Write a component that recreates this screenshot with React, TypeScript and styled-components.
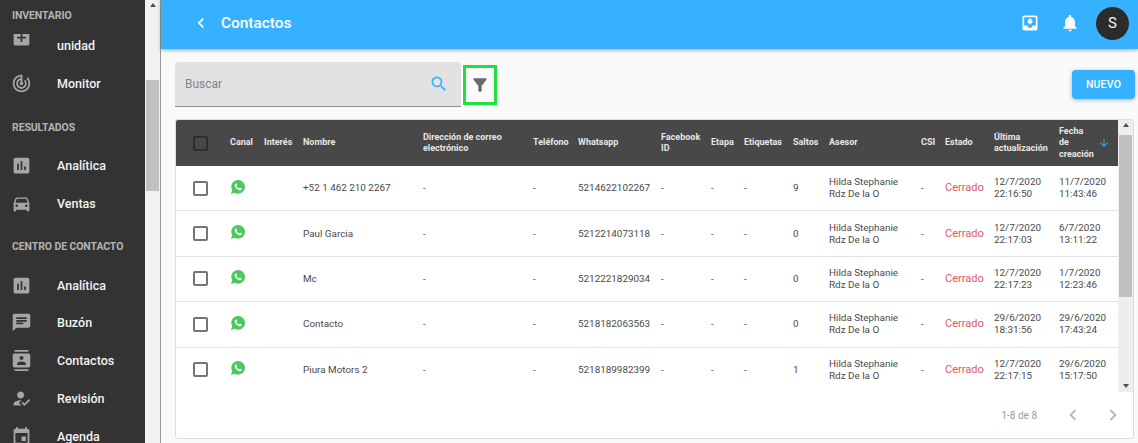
import styled, { createGlobalStyle } from 'styled-components';
import type { ReactNode } from 'react';
import {
  MdAddBox,
  MdArrowDownward,
  MdAssessment,
  MdChat,
  MdChevronLeft,
  MdChevronRight,
  MdContacts,
  MdDirectionsCar,
  MdEvent,
  MdFilterAlt,
  MdHowToReg,
  MdMoveToInbox,
  MdNotifications,
  MdSearch,
  MdTrackChanges,
} from 'react-icons/md';
import { IoLogoWhatsapp } from 'react-icons/io';

const GlobalStyle = createGlobalStyle`
  html, body {
    margin: 0;
    padding: 0;
    height: 100%;
    overflow: hidden;
    font-family: Roboto, "Liberation Sans", sans-serif;
    background: #fafafa;
  }
`;

const COLUMNS = '54px 34px 39px 120px 110px 45px 83px 50px 33px 49px 36px 92px 24px 49px 65px 60px';

const Page = styled.div`
  display: flex;
  width: 1138px;
  height: 443px;
  overflow: hidden;
`;

const Sidebar = styled.nav`
  flex: 0 0 145px;
  height: 443px;
  overflow: hidden;
  background: #333333;
  display: flex;
  flex-direction: column;
`;

const SectionTitle = styled.div<{ $first?: boolean }>`
  position: relative;
  z-index: 1;
  flex: none;
  height: ${({ $first }) => ($first ? '34px' : '36px')};
  margin-top: ${({ $first }) => ($first ? '0' : '8px')};
  padding: ${({ $first }) => ($first ? '10px 0 0 12px' : '11px 0 0 12px')};
  box-sizing: border-box;
  background: #333333;
  color: #b4b4b4;
  font-size: 10.5px;
  font-weight: 700;
  line-height: 12px;
  letter-spacing: -0.1px;
`;

const NavItem = styled.div<{ $clipped?: boolean }>`
  flex: none;
  display: flex;
  align-items: center;
  height: 37.8px;
  margin-top: ${({ $clipped }) => ($clipped ? '-7px' : '0')};
  padding-left: 11px;
  color: #f2f2f2;
  font-size: 12.5px;
  font-weight: 500;

  svg {
    flex: none;
    width: 21px;
    height: 21px;
    margin-right: 25px;
    margin-top: ${({ $clipped }) => ($clipped ? '-16px' : '0')};
    color: #a6a6a6;
  }
`;

const ScrollTrack = styled.div<{ $width: number }>`
  flex: 0 0 ${({ $width }) => $width}px;
  display: flex;
  flex-direction: column;
  align-items: center;
  background: #f1f1f1;
  box-sizing: border-box;
`;

const ArrowUp = styled.div`
  flex: none;
  width: 0;
  height: 0;
  margin-top: 3px;
  border-left: 3.5px solid transparent;
  border-right: 3.5px solid transparent;
  border-bottom: 4px solid #505050;
`;

const ArrowDown = styled.div`
  flex: none;
  width: 0;
  height: 0;
  margin-bottom: 4px;
  border-left: 3.5px solid transparent;
  border-right: 3.5px solid transparent;
  border-top: 4px solid #505050;
`;

const Thumb = styled.div<{ $top: number; $height: number }>`
  flex: none;
  align-self: stretch;
  margin: ${({ $top }) => $top}px 1px 0;
  height: ${({ $height }) => $height}px;
  background: #c1c1c1;
`;

const SideScroll = styled(ScrollTrack)`
  border-right: 1px solid #9a9a9a;
`;

const Main = styled.main`
  flex: 1;
  min-width: 0;
  display: flex;
  flex-direction: column;
  background: #fafafa;
`;

const AppBar = styled.header`
  flex: none;
  height: 49px;
  box-sizing: border-box;
  display: flex;
  align-items: center;
  padding: 0 9px 3px 30px;
  background: #36b1ff;
  box-shadow: 0 1px 4px rgba(0, 0, 0, 0.35);
  color: #ffffff;
  position: relative;
  z-index: 2;
`;

const BackIcon = styled(MdChevronLeft)`
  width: 20px;
  height: 20px;
  margin-right: 10px;
`;

const PageTitle = styled.h1`
  flex: 1;
  margin: 0;
  font-size: 15.4px;
  font-weight: 500;
`;

const BarIcons = styled.div`
  display: flex;
  align-items: center;
  gap: 20px;
  margin-right: 16px;

  svg {
    display: block;
    width: 20px;
    height: 20px;
  }
`;

const Avatar = styled.div`
  width: 33px;
  height: 33px;
  border-radius: 50%;
  background: #2b2b2b;
  display: flex;
  align-items: center;
  justify-content: center;
  font-size: 15px;
  color: #f4f4f4;
`;

const Toolbar = styled.div`
  flex: none;
  display: flex;
  align-items: center;
  height: 45px;
  margin-top: 13px;
  padding: 0 3px 0 14px;
`;

const SearchBox = styled.div`
  width: 286px;
  height: 45px;
  box-sizing: border-box;
  display: flex;
  align-items: center;
  justify-content: space-between;
  padding: 0 12px 0 10px;
  background: #e2e2e2;
  border-bottom: 1px solid #8e8e8e;
  border-radius: 4px 4px 0 0;
  color: #858585;
  font-size: 12px;

  svg {
    width: 20px;
    height: 20px;
    color: #36b1ff;
  }
`;

const FilterButton = styled.div`
  width: 34px;
  height: 40px;
  box-sizing: border-box;
  margin-left: 2px;
  display: flex;
  align-items: center;
  justify-content: center;
  border: 3px solid #1fe03c;
  color: #6a6a6a;

  svg {
    width: 20px;
    height: 20px;
  }
`;

const NewButton = styled.button`
  width: 63px;
  height: 29px;
  margin-left: auto;
  margin-bottom: 1px;
  border: none;
  border-radius: 4px;
  background: #36b1ff;
  box-shadow: 0 1px 4px rgba(0, 0, 0, 0.3);
  color: #ffffff;
  font-family: inherit;
  font-size: 10.5px;
  font-weight: 500;
  letter-spacing: 0.2px;
`;

const Card = styled.section`
  flex: none;
  display: flex;
  flex-direction: column;
  width: 959px;
  height: 320px;
  margin: 12px 0 0 14px;
  box-sizing: border-box;
  border: 1px solid #dcdcdc;
  border-radius: 3px;
  background: #ffffff;
  overflow: hidden;
`;

const TableArea = styled.div`
  flex: none;
  display: flex;
  height: 272px;
`;

const Table = styled.div`
  width: 943px;
  overflow: hidden;
`;

const HeadRow = styled.div`
  display: grid;
  grid-template-columns: ${COLUMNS};
  align-items: center;
  height: 46px;
  background: #484848;
  color: #e6e6e6;
  font-size: 9px;
  font-weight: 700;
  line-height: 11.5px;
`;

const BodyRow = styled.div`
  display: grid;
  grid-template-columns: ${COLUMNS};
  align-items: center;
  height: 45.4px;
  box-sizing: border-box;
  border-bottom: 1px solid #e2e2e2;
  color: #4a4a4a;
  font-size: 9.9px;
  line-height: 12px;
`;

const CheckCell = styled.div`
  padding-left: 17px;
`;

const Checkbox = styled.div<{ $dark?: boolean }>`
  width: 15px;
  height: 15px;
  box-sizing: border-box;
  border: 2px solid ${({ $dark }) => ($dark ? '#2e2e2e' : '#757575')};
  border-radius: 2px;
  background: ${({ $dark }) => ($dark ? 'transparent' : '#ffffff')};
`;

const SortCell = styled.div`
  display: flex;
  align-items: center;
  justify-content: space-between;
  padding-right: 9px;

  svg {
    width: 12px;
    height: 12px;
    color: #36a4ec;
  }
`;

const Whatsapp = styled(IoLogoWhatsapp)`
  display: block;
  width: 16px;
  height: 16px;
  margin-bottom: 3px;
  color: #4ac95f;
`;

const Status = styled.div`
  color: #dd5a5f;
  font-size: 11px;
`;

const Footer = styled.div`
  flex: 1;
  display: flex;
  align-items: center;
  justify-content: flex-end;
  padding-right: 9px;
  color: #9a9a9a;
  font-size: 10px;

  svg {
    width: 22px;
    height: 22px;
    color: #b4b4b4;
    margin-left: 18px;
  }
`;

const PageCount = styled.span`
  margin-right: 7px;
`;

const TableScroll = styled(ScrollTrack)`
  background: #eeeeee;
  justify-content: flex-start;
`;

const Spacer = styled.div`
  flex: 1;
`;

const headers: ReactNode[] = [
  'Canal',
  'Interés',
  'Nombre',
  <>Dirección de correo<br />electrónico</>,
  'Teléfono',
  'Whatsapp',
  <>Facebook<br />ID</>,
  'Etapa',
  'Etiquetas',
  'Saltos',
  'Asesor',
  'CSI',
  'Estado',
  <>Última<br />actualización</>,
];

const contacts = [
  { name: '+52 1 462 210 2267', phone: '5214622102267', jumps: '9', updated: ['12/7/2020', '22:16:50'], created: ['11/7/2020', '11:43:46'] },
  { name: 'Paul Garcia', phone: '5212214073118', jumps: '0', updated: ['12/7/2020', '22:17:03'], created: ['6/7/2020', '13:11:22'] },
  { name: 'Mc', phone: '5212221829034', jumps: '0', updated: ['12/7/2020', '22:17:23'], created: ['1/7/2020', '12:23:46'] },
  { name: 'Contacto', phone: '5218182063563', jumps: '0', updated: ['29/6/2020', '18:31:56'], created: ['29/6/2020', '17:43:24'] },
  { name: 'Piura Motors 2', phone: '5218189982399', jumps: '1', updated: ['12/7/2020', '22:17:15'], created: ['29/6/2020', '15:17:50'] },
];

const App = () => {
  return (
    <>
      <GlobalStyle />
      <Page>
        <Sidebar>
          <SectionTitle $first>INVENTARIO</SectionTitle>
          <NavItem $clipped><MdAddBox />unidad</NavItem>
          <NavItem><MdTrackChanges />Monitor</NavItem>
          <SectionTitle>RESULTADOS</SectionTitle>
          <NavItem><MdAssessment />Analítica</NavItem>
          <NavItem><MdDirectionsCar />Ventas</NavItem>
          <SectionTitle>CENTRO DE CONTACTO</SectionTitle>
          <NavItem><MdAssessment />Analítica</NavItem>
          <NavItem><MdChat />Buzón</NavItem>
          <NavItem><MdContacts />Contactos</NavItem>
          <NavItem><MdHowToReg />Revisión</NavItem>
          <NavItem><MdEvent />Agenda</NavItem>
        </Sidebar>
        <SideScroll $width={16}>
          <ArrowUp />
          <Thumb $top={73} $height={111} />
        </SideScroll>
        <Main>
          <AppBar>
            <BackIcon />
            <PageTitle>Contactos</PageTitle>
            <BarIcons>
              <MdMoveToInbox />
              <MdNotifications />
            </BarIcons>
            <Avatar>S</Avatar>
          </AppBar>
          <Toolbar>
            <SearchBox>
              Buscar
              <MdSearch />
            </SearchBox>
            <FilterButton><MdFilterAlt /></FilterButton>
            <NewButton>NUEVO</NewButton>
          </Toolbar>
          <Card>
            <TableArea>
              <Table>
                <HeadRow>
                  <CheckCell><Checkbox $dark /></CheckCell>
                  {headers.map((header, i) => <div key={i}>{header}</div>)}
                  <SortCell>
                    <div>Fecha<br />de<br />creación</div>
                    <MdArrowDownward />
                  </SortCell>
                </HeadRow>
                {contacts.map((contact) => (
                  <BodyRow key={contact.phone}>
                    <CheckCell><Checkbox /></CheckCell>
                    <div><Whatsapp /></div>
                    <div />
                    <div>{contact.name}</div>
                    <div>-</div>
                    <div>-</div>
                    <div>{contact.phone}</div>
                    <div>-</div>
                    <div>-</div>
                    <div>-</div>
                    <div>{contact.jumps}</div>
                    <div>Hilda Stephanie<br />Rdz De la O</div>
                    <div>-</div>
                    <Status>Cerrado</Status>
                    <div>{contact.updated[0]}<br />{contact.updated[1]}</div>
                    <div>{contact.created[0]}<br />{contact.created[1]}</div>
                  </BodyRow>
                ))}
              </Table>
              <TableScroll $width={15}>
                <ArrowUp />
                <Thumb $top={8} $height={162} />
                <Spacer />
                <ArrowDown />
              </TableScroll>
            </TableArea>
            <Footer>
              <PageCount>1-8 de 8</PageCount>
              <MdChevronLeft />
              <MdChevronRight />
            </Footer>
          </Card>
        </Main>
      </Page>
    </>
  );
};

export default App;
